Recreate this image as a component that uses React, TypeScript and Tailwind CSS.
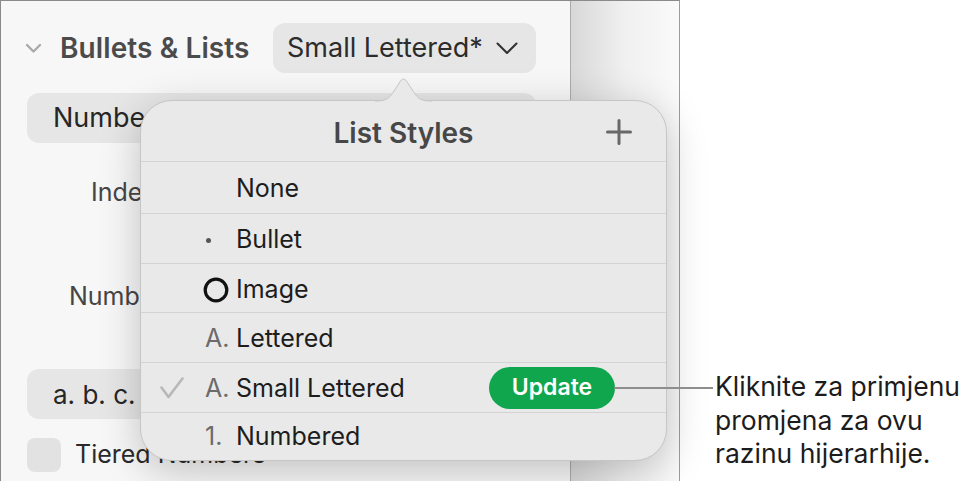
import React from "react";

const font = { fontFamily: "Inter, 'Noto Sans', sans-serif" };

function Check() {
  return (
    <svg width="24" height="22" viewBox="0 0 24 22" fill="none">
      <path d="M1.5 10.5 L8.5 20 L22.5 1.5" stroke="#b8b8b8" strokeWidth="2.6" strokeLinecap="round" strokeLinejoin="round" />
    </svg>
  );
}

type Row = { label: string; icon?: React.ReactNode; h: string; checked?: boolean; update?: boolean; last?: boolean };

export default function App() {
  const rows: Row[] = [
    { label: "None", h: "h-[52px]" },
    { label: "Bullet", h: "h-[50px]", icon: <span className="ml-[2px] mt-[4px] block h-[5px] w-[5px] rounded-full bg-[#555]" /> },
    {
      label: "Image",
      h: "h-[49px]",
      icon: (
        <svg className="ml-[-1px] mt-[3px]" width="26" height="26" viewBox="0 0 26 26" fill="none">
          <circle cx="13" cy="13" r="10.8" stroke="#111" strokeWidth="3.2" />
        </svg>
      ),
    },
    { label: "Lettered", h: "h-[50px]", icon: <span className="ml-[1px] mt-[3px] text-[25px] text-[#6b6b6b]">A.</span> },
    { label: "Small Lettered", h: "h-[50px]", checked: true, update: true, icon: <span className="ml-[1px] mt-[3px] text-[25px] text-[#6b6b6b]">A.</span> },
    { label: "Numbered", h: "flex-1", last: true, icon: <span className="ml-[1px] mt-[3px] text-[25px] text-[#6b6b6b]">1.</span> },
  ];

  return (
    <div className="relative flex h-[481px] w-[975px] overflow-hidden bg-white" style={font}>
      {/* app frame */}
      <div className="flex h-full w-[680px] border-l border-r border-t border-l-[#8a8a8a] border-r-[#9c9c9c] border-t-[#8a8a8a]">
        {/* inspector panel */}
        <div className="flex h-full w-[570px] flex-col border-r border-[#ababab] bg-[#f7f7f7] pl-[26px] pr-[34px]">
          <div className="mt-[22px] flex h-[50px] items-center">
            <svg className="ml-[-2px]" width="17" height="11" viewBox="0 0 17 11" fill="none">
              <path d="M2 2 L8.5 8.5 L15 2" stroke="#a9a9a9" strokeWidth="2.4" strokeLinecap="round" strokeLinejoin="round" />
            </svg>
            <span className="ml-[18px] text-[28px] font-semibold tracking-[0.1px] text-[#4b4b4b]">Bullets &amp; Lists</span>
            <div className="ml-auto flex h-[50px] w-[263px] items-center justify-between rounded-[12px] bg-[#e6e6e6] pl-[14px] pr-[18px]">
              <span className="text-[27px] text-[#2c2c2c]">Small Lettered*</span>
              <svg width="22" height="13" viewBox="0 0 22 13" fill="none">
                <path d="M1.5 1.5 L11 11 L20.5 1.5" stroke="#333" strokeWidth="2.1" strokeLinecap="round" strokeLinejoin="round" />
              </svg>
            </div>
          </div>

          <div className="mt-[20px] flex h-[50px] items-center rounded-[12px] bg-[#e6e6e6] pl-[26px]">
            <span className="text-[27px] text-[#262626]">Numbered</span>
          </div>

          <div className="mt-[34px] pl-[64px] text-[25px] leading-[30px] text-[#454545]">Indent:</div>
          <div className="mt-[74px] pl-[42px] text-[25px] leading-[30px] text-[#454545]">Number:</div>

          <div className="mt-[58px] flex h-[50px] items-center rounded-[12px] bg-[#e6e6e6] pl-[26px]">
            <span className="text-[26px] text-[#262626]">a. b. c.</span>
          </div>

          <div className="mt-[17px] flex items-center">
            <div className="h-[34px] w-[34px] rounded-[8px] bg-[#e2e2e2]" />
            <span className="ml-[14px] text-[25px] text-[#2a2a2a]">Tiered Numbers</span>
          </div>
        </div>
        {/* side strip */}
        <div className="h-full flex-1 bg-gradient-to-r from-[#d8d8d8] via-[#f0f0f0] to-[#fafafa]" />
      </div>

      {/* callout text */}
      <div className="pl-[35px] pt-[370px] text-[26.5px] leading-[33.5px] text-[#1c1c1c]">
        <div>Kliknite za primjenu</div>
        <div>promjena za ovu</div>
        <div>razinu hijerarhije.</div>
      </div>

      {/* popover */}
      <div className="absolute left-[140px] top-[100px] flex h-[361px] w-[527px] flex-col rounded-[32px] border border-[#c6c6c6] bg-[#e9e9e9] shadow-[0_10px_40px_rgba(0,0,0,0.22)]">
        <svg className="absolute left-[234px] top-[-23px]" width="57" height="24" viewBox="0 0 57 24" fill="none">
          <path d="M0 23 C 11 23 14 21 19 13 L 25.5 3 C 27 0.5 30 0.5 31.5 3 L 38 13 C 43 21 46 23 57 23 L 57 24 L 0 24 Z" fill="#e9e9e9" />
          <path d="M0 23 C 11 23 14 21 19 13 L 25.5 3 C 27 0.5 30 0.5 31.5 3 L 38 13 C 43 21 46 23 57 23" stroke="#c6c6c6" strokeWidth="1" />
        </svg>

        <div className="relative flex h-[61px] shrink-0 items-center justify-center border-b border-[#d3d3d3]">
          <span className="mt-[3px] text-[28px] font-semibold text-[#474747]">List Styles</span>
          <svg className="absolute right-[34px] top-[18px]" width="26" height="26" viewBox="0 0 26 26" fill="none">
            <path d="M13 1.5 V24.5 M1.5 13 H24.5" stroke="#686868" strokeWidth="3" strokeLinecap="round" />
          </svg>
        </div>

        {rows.map((r) => (
          <div
            key={r.label}
            className={`flex items-center pl-[19px] ${r.h} ${r.last ? "pb-[2px]" : "shrink-0 border-b border-[#d3d3d3]"}`}
          >
            <div className="flex w-[44px] items-center">{r.checked ? <Check /> : null}</div>
            <div className="flex w-[32px] items-center">{r.icon}</div>
            <span className="mt-[3px] text-[25px] text-[#1d1d1d]">{r.label}</span>
            {r.update ? (
              <div className="ml-auto mr-[51px] flex h-[42px] w-[126px] items-center justify-center rounded-full bg-[#0fa64e]">
                <span className="text-[23px] font-semibold text-white">Update</span>
              </div>
            ) : null}
          </div>
        ))}
      </div>

      {/* callout line */}
      <div className="absolute left-[614px] top-[387px] z-10 h-[2px] w-[99px] bg-[#8e8e8e]" />
    </div>
  );
}
